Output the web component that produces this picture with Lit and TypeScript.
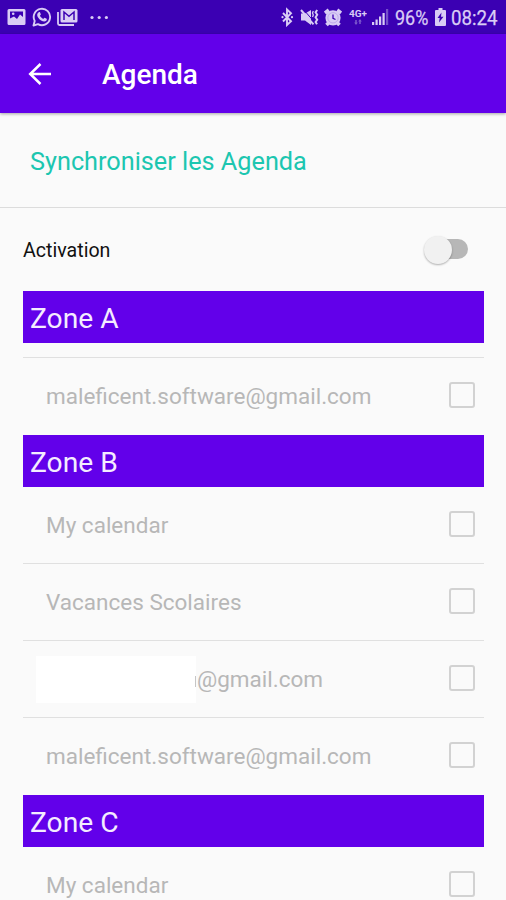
import { LitElement, html, css, svg } from "lit";
import { customElement } from "lit/decorators.js";

interface Calendar {
  name: string;
  masked?: boolean;
}

interface Zone {
  title: string;
  calendars: Calendar[];
  spaced?: boolean;
}

const ZONES: Zone[] = [
  { title: "Zone A", spaced: true, calendars: [{ name: "maleficent.software@gmail.com" }] },
  {
    title: "Zone B",
    calendars: [
      { name: "My calendar" },
      { name: "Vacances Scolaires" },
      { name: "@gmail.com", masked: true },
      { name: "maleficent.software@gmail.com" },
    ],
  },
  { title: "Zone C", calendars: [{ name: "My calendar" }] },
];

@customElement("status-bar")
export class StatusBar extends LitElement {
  static styles = css`
    :host {
      display: flex;
      align-items: center;
      box-sizing: border-box;
      height: 34px;
      padding: 0 8px 0 7px;
      background: #3b00b3;
      color: #d9ccf5;
      font: 19.5px/34px Roboto, sans-serif;
    }
    svg { display: block; flex: none; }
    .photo { margin-right: 6px; }
    .phone { margin-right: 5px; }
    .mail { margin-right: 12px; }
    .dots { margin-right: auto; }
    .bluetooth { margin-right: 6px; }
    .mute { margin-right: 5px; }
    .alarm { margin-right: 7px; }
    .network { margin-right: 5px; }
    .signal { margin-right: 6px; }
    .gen { font-weight: 700; font-size: 9px; }
    .percent { width: 35px; margin-right: 5px; padding-top: 3px; white-space: nowrap; }
    .clock { width: 47px; margin-left: 5px; padding-top: 3px; white-space: nowrap; }
    .narrow { display: inline-block; transform-origin: 0 50%; -webkit-text-stroke: 0.25px #d9ccf5; }
    .percent .narrow { transform: scaleX(0.92); }
    .clock .narrow { transform: scaleX(0.96); }
  `;

  render() {
    return html`
      <svg class="photo" width="19" height="18" viewBox="0 0 19 18">
        <path fill="#d9ccf5" fill-rule="evenodd" d="M2 1h15a1.500 1.500 0 0 1 1.500 1.500v13A1.500 1.500 0 0 1 17 17H2a1.500 1.500 0 0 1-1.500-1.500v-13A1.500 1.500 0 0 1 2 1zM3 3.500v7l4-2 3 2.500 3-4.500 3 2.500V3.500z" />
        <circle cx="6.200" cy="5.800" r="1.300" fill="#d9ccf5" />
      </svg>
      <svg class="phone" width="20" height="20" viewBox="0 0 20 20">
        <path fill="none" stroke="#d9ccf5" stroke-width="1.900" stroke-linejoin="round" d="M1.500 18.500l1.200-4.600a8.200 8.200 0 1 1 3.300 3.300z" />
        <path fill="#d9ccf5" d="M6.800 5.200c.6-.3 1.100-.2 1.300.3l.7 1.700c.1.500-.7 1.200-.9 1.500.8 1.500 1.800 2.400 3.400 3.200.5-.4.900-1.300 1.400-1.100l1.900 1c.4.300.2 1.500-.3 2-1.300 1.300-3.300.9-5.200-.3-2-1.300-3.700-3.500-3.900-5.300-.1-1.300.6-2.500 1.600-3z" />
      </svg>
      <svg class="mail" width="21" height="18" viewBox="0 0 21 18">
        <path fill="none" stroke="#d9ccf5" stroke-width="1.800" d="M1 4v11.500a1.500 1.500 0 0 0 1.500 1.500H17" />
        <rect x="3.500" y="1" width="17" height="13.500" rx="1.500" fill="#d9ccf5" />
        <path fill="none" stroke="#3b00b3" stroke-width="1.500" d="M7 12V4l5 4.200L17 4v8" />
      </svg>
      <svg class="dots" width="19" height="18" viewBox="0 0 19 18" fill="#d9ccf5">
        <circle cx="2" cy="9.500" r="1.600" /><circle cx="9.200" cy="9.500" r="1.600" /><circle cx="16.400" cy="9.500" r="1.600" />
      </svg>
      <svg class="bluetooth" width="13" height="20" viewBox="0 0 13 20">
        <path fill="none" stroke="#d9ccf5" stroke-width="1.900" d="M2 6l8 8.300-4 3.700V2.500l4 3.700-8 8.300" />
        <circle cx="1.500" cy="10.200" r="1.100" fill="#d9ccf5" /><circle cx="11" cy="10.200" r="1.100" fill="#d9ccf5" />
      </svg>
      <svg class="mute" width="19" height="20" viewBox="0 0 19 20">
        <path fill="#d9ccf5" d="M1 6.500h4l6-3.500v15l-6-4.500H1z" />
        <path stroke="#3b00b3" stroke-width="1" d="M3.200 2.200l11 12.600" />
        <path stroke="#d9ccf5" stroke-width="2" d="M1 3l12.500 14.400" />
        <path fill="none" stroke="#d9ccf5" stroke-width="2" d="M17.200 3l-1.600 2.300 1.600 2.400-1.600 2.500 1.600 2.500-1.600 2.300 1.400 2.200" />
        <path fill="none" stroke="#d9ccf5" stroke-width="1.300" d="M13.300 4l-.8 2 .8 2-.8 2" />
      </svg>
      <svg class="alarm" width="18" height="19" viewBox="0 0 18 19">
        <circle cx="9" cy="9.800" r="7.600" fill="#d9ccf5" />
        <path stroke="#d9ccf5" stroke-width="3.600" d="M1 5L4.800 2M17 5l-3.800-3M2.500 17l3-3M15.500 17l-3-3" />
        <circle cx="9" cy="9.800" r="5.200" fill="none" stroke="#b59ee6" stroke-width=".8" />
        <path fill="none" stroke="#3b00b3" stroke-width="1.300" d="M9 6.500v3.800l2.500 1.200" />
      </svg>
      <svg class="network" width="18" height="20" viewBox="0 0 18 20">
        <text class="gen" x="0" y="9.500" fill="#d9ccf5" textLength="18" lengthAdjust="spacingAndGlyphs">4G+</text>
        <path stroke="#7d58cd" stroke-width="1.500" d="M7 13v4M11 13v4" />
        <path fill="#7d58cd" d="M5.200 15.500h3.600L7 18zM9.200 14.500h3.600L11 12z" />
      </svg>
      <svg class="signal" width="17" height="18" viewBox="0 0 17 18">
        ${[3, 5.500, 8.500, 12, 16].map(
          (h, i) => svg`<rect x=${i * 3.500} y=${17 - h} width="2.200" height=${h} fill=${i < 4 ? "#d9ccf5" : "#7650ca"} />`
        )}
      </svg>
      <span class="percent"><span class="narrow">96%</span></span>
      <svg width="11" height="18" viewBox="0 0 11 18">
        <path fill="#d9ccf5" d="M3.500 0h4v2H10a1 1 0 0 1 1 1v14a1 1 0 0 1-1 1H1a1 1 0 0 1-1-1V3a1 1 0 0 1 1-1h2.500z" />
        <path fill="#3b00b3" d="M6.500 4.500L2.500 10h2.200L4 14.500 8.500 8.700H6z" />
      </svg>
      <span class="clock"><span class="narrow">08:24</span></span>
    `;
  }
}

@customElement("calendar-row")
export class CalendarRow extends LitElement {
  static properties = { calendar: { attribute: false } };
  declare calendar: Calendar;

  static styles = css`
    :host {
      display: flex;
      align-items: center;
      height: 76px;
      padding: 0 9px 0 23px;
      color: #b7b7b7;
      font: 22.5px/28px Roboto, sans-serif;
    }
    .name { flex: 1; white-space: nowrap; }
    .mask {
      box-sizing: border-box;
      width: 160px;
      height: 47px;
      margin-left: -10px;
      background: #fff;
    }
    .sliver { width: 1px; height: 11px; margin: 4px 1px 0 -1px; background: #c6c6c6; }
    .box {
      box-sizing: border-box;
      width: 26px;
      height: 26px;
      margin-bottom: 2px;
      border: 2px solid #d2d2d2;
      border-radius: 3px;
    }
  `;

  render() {
    return html`
      ${this.calendar.masked ? html`<span class="mask"></span><span class="sliver"></span>` : ""}
      <span class="name">${this.calendar.name}</span>
      <span class="box"></span>
    `;
  }
}

@customElement("app-root")
export class AppRoot extends LitElement {
  static styles = css`
    :host {
      display: flex;
      flex-direction: column;
      height: 900px;
      overflow: hidden;
      background: #fafafa;
      font-family: Roboto, sans-serif;
    }
    status-bar, .bar, .heading, .activation { flex: none; }
    .bar {
      display: flex;
      align-items: center;
      height: 79px;
      padding-left: 28px;
      background: #6200ea;
      color: #fff;
      box-shadow: 0 1px 3px rgba(0, 0, 0, 0.35);
    }
    .title {
      margin: 2px 0 0 50px;
      font-size: 28px;
      line-height: 36px;
      font-weight: 500;
    }
    .heading {
      box-sizing: border-box;
      height: 95px;
      padding: 33px 30px 0;
      border-bottom: 1px solid #dcdcdc;
      color: #1cc6b0;
      font-size: 25.25px;
      line-height: 32px;
    }
    .activation {
      display: flex;
      align-items: center;
      justify-content: space-between;
      height: 83px;
      padding: 0 37px 0 23px;
      color: #111;
      font-size: 19.6px;
    }
    .label { padding-top: 2px; }
    .switch {
      display: flex;
      align-items: center;
      width: 45px;
      height: 32px;
    }
    .knob {
      z-index: 1;
      width: 28px;
      height: 28px;
      border-radius: 50%;
      background: #f1f1f1;
      box-shadow: 0 1px 2px rgba(0, 0, 0, 0.3);
    }
    .track {
      width: 32px;
      height: 20px;
      margin: -2px 0 0 -16px;
      border-radius: 10px;
      background: #b7b7b7;
    }
    .zones { padding: 0 22px 0 23px; }
    .group { padding-bottom: 1px; }
    .zone {
      height: 52px;
      box-sizing: border-box;
      padding: 2px 7px 0;
      background: #6200ea;
      color: #f4ecff;
      font-size: 28.2px;
      line-height: 52px;
    }
    .spaced { margin-bottom: 14px; }
    .line { height: 1px; background: #e0e0e0; }
  `;

  render() {
    return html`
      <status-bar></status-bar>
      <div class="bar">
        <svg width="24" height="24" viewBox="0 0 24 24">
          <path fill="none" stroke="#fff" stroke-width="2.500" d="M23 12H2.500M12.500 2L2.200 12l10.300 10" />
        </svg>
        <span class="title">Agenda</span>
      </div>
      <div class="heading">Synchroniser les Agenda</div>
      <div class="activation">
        <span class="label">Activation</span>
        <span class="switch"><span class="knob"></span><span class="track"></span></span>
      </div>
      <div class="zones">
        ${ZONES.map(
          (zone) => html`
            <div class="group">
              <div class="zone ${zone.spaced ? "spaced" : ""}">${zone.title}</div>
              ${zone.calendars.map(
                (calendar, i) => html`
                  ${i > 0 || zone.spaced ? html`<div class="line"></div>` : ""}
                  <calendar-row .calendar=${calendar}></calendar-row>
                `
              )}
            </div>
          `
        )}
      </div>
    `;
  }
}
